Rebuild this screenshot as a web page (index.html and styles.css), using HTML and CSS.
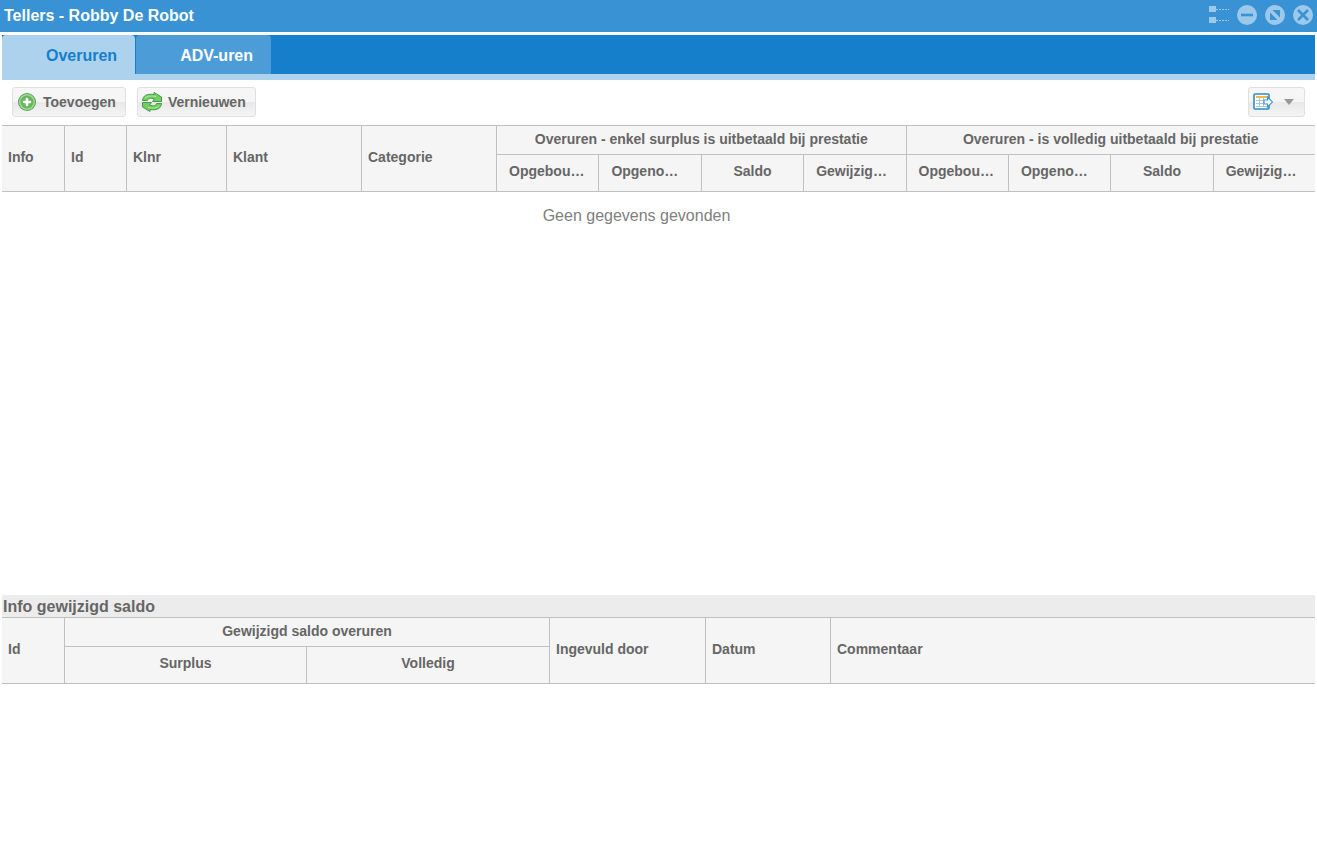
FILE: index.html
```html
<!DOCTYPE html>
<html lang="nl">
<head>
    <meta charset="utf-8">
    <title>Tellers - Robby De Robot</title>
    <link rel="stylesheet" href="styles.css">
</head>
<body>
    <header class="window-header">
        <h1>Tellers - Robby De Robot</h1>
        <div class="window-tools">
            <button class="tool tool-list" aria-label="Lijst">
                <svg width="20" height="20" viewBox="0 0 20 20">
                    <path fill="currentColor" d="M0 1h7v6H0zM0 12h7v6H0z"/>
                    <path stroke="currentColor" stroke-dasharray="2 1" d="M7 4.500h13M7 15.500h13"/>
                </svg>
            </button>
            <button class="tool" aria-label="Minimaliseren">
                <svg width="20" height="20" viewBox="0 0 20 20">
                    <circle cx="10" cy="10" r="10" fill="currentColor"/>
                    <path class="cut" d="M4 10h12" stroke-width="2.6"/>
                </svg>
            </button>
            <button class="tool" aria-label="Maximaliseren">
                <svg width="20" height="20" viewBox="0 0 20 20">
                    <circle cx="10" cy="10" r="10" fill="currentColor"/>
                    <path class="cut-fill" d="M7.500 5H15v7.500zM5 7.500V15h7.500z"/>
                </svg>
            </button>
            <button class="tool" aria-label="Sluiten">
                <svg width="20" height="20" viewBox="0 0 20 20">
                    <circle cx="10" cy="10" r="10" fill="currentColor"/>
                    <path class="cut" d="M5 5l10 10M15 5l-10 10" stroke-width="2.6"/>
                </svg>
            </button>
        </div>
    </header>

    <main class="window-body">
        <nav class="tabs">
            <button class="tab active">Overuren</button>
            <button class="tab">ADV-uren</button>
        </nav>

        <div class="toolbar">
            <button class="button">
                <svg width="20" height="20" viewBox="0 0 20 20">
                    <circle cx="10" cy="10" r="9" fill="#55a050"/>
                    <circle cx="10" cy="10" r="8" fill="#a3d69a"/>
                    <circle cx="10" cy="10" r="6.500" fill="#66b85c"/>
                    <path d="M10 7v6M7 10h6" stroke="#fff" stroke-width="2.600" stroke-linecap="round"/>
                </svg>
                Toevoegen
            </button>
            <button class="button">
                <svg width="20" height="20" viewBox="0 0 20 20">
                    <g fill="#6fd05c" stroke="#4c9657" stroke-linejoin="round">
                        <path d="M0.500 8.500C1 3.500 5 1.500 12 2.500V0.500L19.500 5V9.500H10.500L12.500 7C8.500 5.500 6 6 5.500 8.500z"/>
                        <path d="M19.500 11.500C19 16.500 15 18.500 8 17.500V19.500L0.500 15V10.500H9.500L7.500 13C11.500 14.500 14 14 14.500 11.500z"/>
                    </g>
                    <path d="M3 6C5 4 9 3.500 14 4.500M17 14C15 16 11 16.500 6 15.500" fill="none" stroke="#a8ee98"/>
                </svg>
                Vernieuwen
            </button>
            <button class="button button-export" aria-label="Exporteren">
                <svg width="20" height="18" viewBox="0 0 20 18">
                    <rect x="1" y="1" width="15" height="15" rx="1" fill="#fff" stroke="#2b8cc4" stroke-width="1.600"/>
                    <path d="M3 4h11" stroke="#f5b942" stroke-width="2"/>
                    <path d="M3 7.500h11M3 10.500h11M3 13.500h11M6.500 5v9M10.500 5v9" stroke="#a9c6e2"/>
                    <path d="M11 7h3.500V4L19.500 9L14.500 14V11H11z" fill="#fff" stroke="#3f97cc" stroke-width="1.200"/>
                </svg>
                <svg class="arrow" width="10" height="6" viewBox="0 0 10 6">
                    <path d="M0 0h10L5 6z" fill="#999"/>
                </svg>
            </button>
        </div>

        <section class="overview">
            <table class="grid">
                <colgroup>
                    <col class="col-small">
                    <col class="col-small">
                    <col class="col-number">
                    <col class="col-text">
                    <col class="col-text">
                    <col span="8">
                </colgroup>
                <thead>
                    <tr class="group-row">
                        <th rowspan="2">Info</th>
                        <th rowspan="2">Id</th>
                        <th rowspan="2">Klnr</th>
                        <th rowspan="2">Klant</th>
                        <th rowspan="2">Categorie</th>
                        <th class="group" colspan="4">Overuren - enkel surplus is uitbetaald bij prestatie</th>
                        <th class="group" colspan="4">Overuren - is volledig uitbetaald bij prestatie</th>
                    </tr>
                    <tr class="sub-row">
                        <th>Opgebouwd</th>
                        <th>Opgenomen</th>
                        <th>Saldo</th>
                        <th>Gewijzigd saldo</th>
                        <th>Opgebouwd</th>
                        <th>Opgenomen</th>
                        <th>Saldo</th>
                        <th>Gewijzigd saldo</th>
                    </tr>
                </thead>
            </table>
            <p class="empty">Geen gegevens gevonden</p>
        </section>

        <section class="details">
            <h2>Info gewijzigd saldo</h2>
            <table class="grid">
                <colgroup>
                    <col class="col-small">
                    <col class="col-surplus">
                    <col class="col-full">
                    <col class="col-author">
                    <col class="col-date">
                    <col>
                </colgroup>
                <thead>
                    <tr class="group-row">
                        <th rowspan="2">Id</th>
                        <th class="group" colspan="2">Gewijzigd saldo overuren</th>
                        <th rowspan="2">Ingevuld door</th>
                        <th rowspan="2">Datum</th>
                        <th rowspan="2">Commentaar</th>
                    </tr>
                    <tr class="sub-row">
                        <th>Surplus</th>
                        <th>Volledig</th>
                    </tr>
                </thead>
            </table>
        </section>
    </main>
</body>
</html>
```

FILE: styles.css
```css
* {
    box-sizing: border-box;
}

body {
    display: flex;
    flex-direction: column;
    min-height: 100vh;
    margin: 0;
    font-family: "Liberation Sans", Arial, sans-serif;
    font-size: 14px;
    color: #666;
    background-color: #fff;
}

h1, h2, p {
    margin: 0;
}

button {
    border: none;
    font-family: inherit;
    font-weight: bold;
    cursor: pointer;
}

/* Window title */
.window-header {
    display: flex;
    justify-content: space-between;
    height: 32px;
    padding: 5px 4px 0;
    background-color: #3892d4;
}

.window-header h1 {
    font-size: 16px;
    line-height: 22px;
    color: #fff;
}

.window-tools {
    display: flex;
    align-items: flex-start;
    gap: 8px;
}

.tool {
    display: flex;
    padding: 0;
    background: none;
    color: #9cc9ea;
}

.tool .cut {
    fill: none;
    stroke: #3892d4;
}

.tool .cut-fill {
    fill: #3892d4;
}

.window-body {
    display: flex;
    flex: 1;
    flex-direction: column;
    padding: 3px 2px 0;
}

/* Tabs */
.tabs {
    display: flex;
    gap: 1px;
    height: 45px;
    border-bottom: 6px solid #add2ed;
    background-color: #157fcc;
}

.tab {
    padding: 2px 18px 0 44px;
    border-radius: 4px 4px 0 0;
    font-size: 16px;
    line-height: 20px;
    color: #fff;
    background-color: #4b9cd7;
}

.tab.active {
    color: #157fcc;
    background-color: #add2ed;
}

/* Toolbar */
.toolbar {
    display: flex;
    gap: 11px;
    padding: 7px 10px 8px;
}

.button {
    display: flex;
    align-items: center;
    gap: 6px;
    height: 30px;
    padding: 0 9px 0 4px;
    border: 1px solid #e0e0e0;
    border-radius: 3px;
    font-size: 14px;
    color: #666;
    background: linear-gradient(#f6f6f6, #f5f5f5 50%, #e8e8e8 51%, #f5f5f5);
}

.button-export {
    gap: 11px;
    margin-left: auto;
    padding-right: 10px;
}

/* Grids */
.grid {
    width: 100%;
    table-layout: fixed;
    border-spacing: 0;
    border-top: 1px solid #c0c0c0;
    border-bottom: 1px solid #c0c0c0;
    background-color: #f5f5f5;
}

.grid th {
    overflow: hidden;
    padding: 0 6px 3px;
    border-left: 1px solid #c0c0c0;
    line-height: 16px;
    text-align: left;
    text-overflow: ellipsis;
    white-space: nowrap;
}

.grid .group-row th:first-child {
    border-left: none;
}

.grid .group-row {
    height: 29px;
}

.grid .group-row .group {
    padding-bottom: 2px;
    border-bottom: 1px solid #c0c0c0;
    text-align: center;
}

.grid .sub-row {
    height: 36px;
}

.grid .sub-row th {
    padding: 0 12px 4px;
    text-align: center;
}

.col-small {
    width: 62px;
}

.col-number {
    width: 100px;
}

.col-text {
    width: 135px;
}

.col-surplus {
    width: 242px;
}

.col-full {
    width: 243px;
}

.col-author {
    width: 156px;
}

.col-date {
    width: 125px;
}

.overview {
    flex: 1;
}

.empty {
    padding: 14px 44px 14px 0;
    font-size: 16px;
    line-height: 20px;
    text-align: center;
    color: #808080;
}

.details {
    min-height: 254px;
}

.details h2 {
    padding: 1px 1px 0;
    font-size: 16px;
    line-height: 21px;
    background-color: #ececec;
}
```
